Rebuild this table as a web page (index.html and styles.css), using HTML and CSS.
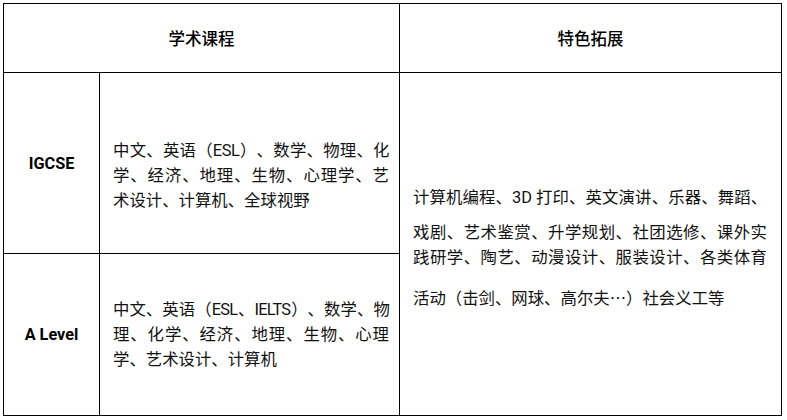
FILE: index.html
```html
<!DOCTYPE html>
<html lang="zh-CN">
<head>
<meta charset="utf-8">
<link rel="stylesheet" href="styles.css">
</head>
<body>
<table class="grid">
  <colgroup>
    <col class="c1">
    <col class="c2">
    <col class="c3">
  </colgroup>
  <tr class="head">
    <th colspan="2">学术课程</th>
    <th>特色拓展</th>
  </tr>
  <tr class="r1">
    <td class="label">IGCSE</td>
    <td class="mid mid-top">
      <span class="ln j tight0">中文、英语（ESL）、数学、物理、化</span>
      <span class="ln j">学、经济、地理、生物、心理学、艺</span>
      <span class="ln">术设计、计算机、全球视野</span>
    </td>
    <td class="ext" rowspan="2">
      <p class="p1"><span class="ln j tight1">计算机编程、3D 打印、英文演讲、乐器、舞蹈、</span></p>
      <p class="p2"><span class="ln j">戏剧、艺术鉴赏、升学规划、社团选修、课外实</span><span class="ln j">践研学、陶艺、动漫设计、服装设计、各类体育</span></p>
      <p class="p3"><span class="ln">活动（击剑、网球、高尔夫<span class="cjk">…</span>）社会义工等</span></p>
    </td>
  </tr>
  <tr class="r2">
    <td class="label">A Level</td>
    <td class="mid">
      <span class="ln j tight2">中文、英语（ESL、IELTS）、数学、物</span>
      <span class="ln j">理、化学、经济、地理、生物、心理</span>
      <span class="ln">学、艺术设计、计算机</span>
    </td>
  </tr>
</table>
</body>
</html>
```

FILE: styles.css
```css
html, body {
  margin: 0;
  padding: 0;
  background: #fff;
}
body {
  padding: 3px 0 0 3px;
  font-family: Roboto, "Noto Sans CJK SC", sans-serif;
  color: #111;
  text-spacing-trim: space-all;
}
.grid {
  border-collapse: collapse;
  table-layout: fixed;
  width: 778px;
}
.c1 { width: 96px; }
.c2 { width: 300px; }
.c3 { width: 382px; }
.grid th, .grid td {
  border: 1px solid #000;
  padding: 0;
  vertical-align: middle;
}
.head { height: 69px; }
.r1 { height: 181px; }
.r2 { height: 162px; }
.head th {
  font-family: "Noto Sans CJK SC", sans-serif;
  font-weight: 500;
  font-size: 16.5px;
  text-align: center;
  color: #000;
}
.label {
  font-family: Roboto, "Liberation Sans", sans-serif;
  font-weight: 700;
  font-size: 16.3px;
  text-align: center;
  color: #000;
}
.ln {
  display: block;
  line-height: 25px;
  font-size: 16.4px;
  white-space: nowrap;
}
.ln.j {
  text-align: justify;
  text-align-last: justify;
  white-space: normal;
}
.tight0 { letter-spacing: -0.5px; }
.tight1 { letter-spacing: -0.15px; }
.tight2 { letter-spacing: -0.8px; }
.cjk {
  font-family: "Noto Sans CJK SC", sans-serif;
}
.mid {
  padding: 0 10px 0 13px !important;
}
.mid-top {
  padding-top: 25px !important;
}
.ext {
  padding: 7px 14px 0 13px !important;
}
.ext p {
  margin: 0;
}
.p1 { margin-bottom: 10px !important; }
.p3 { margin-top: 15px !important; }
```
